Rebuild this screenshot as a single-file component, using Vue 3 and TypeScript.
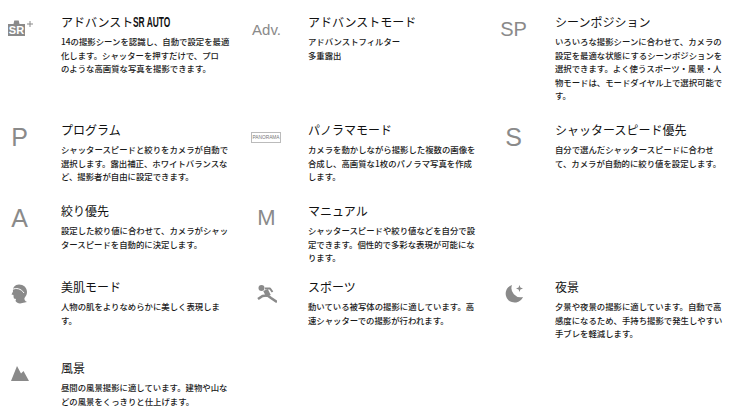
<script setup lang="ts">
interface Item {
  id: string
  title: string
  suffix?: string
  lines: string[]
  icon: string
  glyph?: string
}

const items: Item[] = [
  { id: 'sr', title: 'アドバンスト', suffix: 'SR AUTO', icon: 'sr', lines: ['14の撮影シーンを認識し、自動で設定を最適', '化します。シャッターを押すだけで、プロ', 'のような高画質な写真を撮影できます。'] },
  { id: 'adv', title: 'アドバンストモード', icon: 'text adv', glyph: 'Adv.', lines: ['アドバンストフィルター', '多重露出'] },
  { id: 'sp', title: 'シーンポジション', icon: 'text sp', glyph: 'SP', lines: ['いろいろな撮影シーンに合わせて、カメラの', '設定を最適な状態にするシーンポジションを', '選択できます。よく使うスポーツ・風景・人', '物モードは、モードダイヤル上で選択可能で', 'す。'] },
  { id: 'p', title: 'プログラム', icon: 'text big', glyph: 'P', lines: ['シャッタースピードと絞りをカメラが自動で', '選択します。露出補正、ホワイトバランスな', 'ど、撮影者が自由に設定できます。'] },
  { id: 'pano', title: 'パノラマモード', icon: 'pano', lines: ['カメラを動かしながら撮影した複数の画像を', '合成し、高画質な1枚のパノラマ写真を作成', 'します。'] },
  { id: 's', title: 'シャッタースピード優先', icon: 'text big', glyph: 'S', lines: ['自分で選んだシャッタースピードに合わせ', 'て、カメラが自動的に絞り値を設定します。'] },
  { id: 'a', title: '絞り優先', icon: 'text big', glyph: 'A', lines: ['設定した絞り値に合わせて、カメラがシャッ', 'タースピードを自動的に決定します。'] },
  { id: 'm', title: 'マニュアル', icon: 'text m', glyph: 'M', lines: ['シャッタースピードや絞り値などを自分で設', '定できます。個性的で多彩な表現が可能にな', 'ります。'] },
  { id: 'blank', title: '', icon: '', lines: [] },
  { id: 'beauty', title: '美肌モード', icon: 'beauty', lines: ['人物の肌をよりなめらかに美しく表現しま', 'す。'] },
  { id: 'sports', title: 'スポーツ', icon: 'sports', lines: ['動いている被写体の撮影に適しています。高', '速シャッターでの撮影が行われます。'] },
  { id: 'night', title: '夜景', icon: 'night', lines: ['夕景や夜景の撮影に適しています。自動で高', '感度になるため、手持ち撮影で発生しやすい', '手ブレを軽減します。'] },
  { id: 'land', title: '風景', icon: 'land', lines: ['昼間の風景撮影に適しています。建物や山な', 'どの風景をくっきりと仕上げます。'] },
]
</script>

<template>
  <main class="grid">
    <article v-for="item in items" :key="item.id" class="item">
      <template v-if="item.title">
        <div class="icon" :class="item.icon">
          <span v-if="item.glyph">{{ item.glyph }}</span>
          <svg v-else-if="item.id === 'sr'" class="sr-svg" width="25" height="17" viewBox="0 0 25 17">
            <path d="M0 5h5.500l.8-3.500h4.400l.8 3.500H17v12H0z" fill="#8a8a8a" />
            <text x="8.500" y="15" text-anchor="middle" class="sr-text">SR</text>
            <path d="M19 5h6M22 2v6" stroke="#8a8a8a" stroke-width="1" fill="none" />
          </svg>
          <span v-else-if="item.id === 'pano'" class="pano-box">PANORAMA</span>
          <svg v-else-if="item.id === 'beauty'" width="17" height="20" viewBox="0 0 17 20">
            <path d="M8 .5C12.500.5 16 3.500 16 8c0 3-1.500 4.500-2.500 6-.5 1.500.5 3 2.500 4l-7 1.500c-2 0-3.500-1-4.500-2.500l.5-2-2-.5c-.5-1.500-.5-2.500-.5-3.500L.5 10.500 2 7.500C1.500 3.500 4 .5 8 .5z" fill="#8a8a8a" />
            <path d="M1.500 5.500C5 3.500 10 4.500 13 9" stroke="#fff" stroke-width="1" fill="none" />
          </svg>
          <svg v-else-if="item.id === 'sports'" width="20" height="18" viewBox="0 0 20 18" fill="none" stroke="#8a8a8a" stroke-linejoin="round">
            <circle cx="4.500" cy="3" r="3" fill="#8a8a8a" stroke="none" />
            <path d="M8.500 5L11.500 11" stroke-width="5" />
            <path d="M8 3.500h5l2.500 3.500" stroke-width="2" />
            <path d="M10.500 10.500l3.500 2.500 6 4" stroke-width="2.600" />
            <path d="M10 10.500l-4.500.5L1 14" stroke-width="2.600" />
          </svg>
          <svg v-else-if="item.id === 'night'" width="20" height="18" viewBox="0 0 20 18">
            <path d="M8 0A9 9 0 1 0 19 12 9.200 9.200 0 0 1 8 0z" fill="#8a8a8a" />
            <path d="M15.500 0l.9 2.600 2.600.9-2.600.9-.9 2.600-.9-2.600-2.600-.9 2.600-.9z" fill="#8a8a8a" />
          </svg>
          <svg v-else-if="item.id === 'land'" class="land-svg" width="18" height="15" viewBox="0 0 18 15">
            <path d="M0 15L6 0l4 7.500L12.500 5 18 15z" fill="#8a8a8a" />
          </svg>
        </div>
        <div class="body">
          <h3 class="title">{{ item.title }}<span v-if="item.suffix" class="suffix">{{ item.suffix }}</span></h3>
          <p class="desc">
            <span v-for="line in item.lines" :key="line" class="line">{{ line }}</span>
          </p>
        </div>
      </template>
    </article>
  </main>
</template>

<style scoped>
.grid {
  display: grid;
  grid-template-columns: repeat(3, 247px);
  grid-template-rows: 108px 81px 76px 81px 49px;
  padding-top: 13px;
  font-family: "Noto Sans CJK JP", "Liberation Sans", sans-serif;
  background: #fff;
}
.item {
  display: flex;
  gap: 22px;
  min-width: 0;
}
.icon {
  width: 39px;
  height: 32px;
  flex: none;
  display: flex;
  align-items: center;
  justify-content: center;
  color: #8a8a8a;
  font-family: "Liberation Sans", sans-serif;
  line-height: 1;
}
.text { font-size: 25px; }
.adv { font-size: 15px; }
.sp { font-size: 20px; }
.m { font-size: 22px; }
.sr-svg {
  margin: 0 0 4px 2px;
  overflow: visible;
}
.land-svg {
  margin-bottom: 4px;
}
.sr-text {
  font-family: "Liberation Sans", sans-serif;
  font-size: 11px;
  font-weight: 700;
  fill: #fff;
}
.pano-box {
  display: block;
  width: 30px;
  height: 11px;
  margin-right: 1px;
  border: 1px solid #bbb;
  box-sizing: border-box;
  font-size: 4.800px;
  line-height: 9px;
  text-align: center;
  white-space: nowrap;
  color: #777;
}
.body {
  flex: 1;
  min-width: 0;
}
.title {
  margin: 0;
  font-size: 12px;
  line-height: 17px;
  font-weight: 400;
  color: #111;
  white-space: nowrap;
}
.suffix {
  display: inline-block;
  font-family: "Liberation Sans", sans-serif;
  font-weight: 700;
  font-size: 14px;
  line-height: 12px;
  transform: scaleX(0.6);
  transform-origin: left center;
}
.desc {
  margin: 5px 0 0;
  font-size: 8.400px;
  line-height: 13.600px;
  font-weight: 500;
  color: #1a1a1a;
}
.line {
  display: block;
  white-space: nowrap;
}
</style>
